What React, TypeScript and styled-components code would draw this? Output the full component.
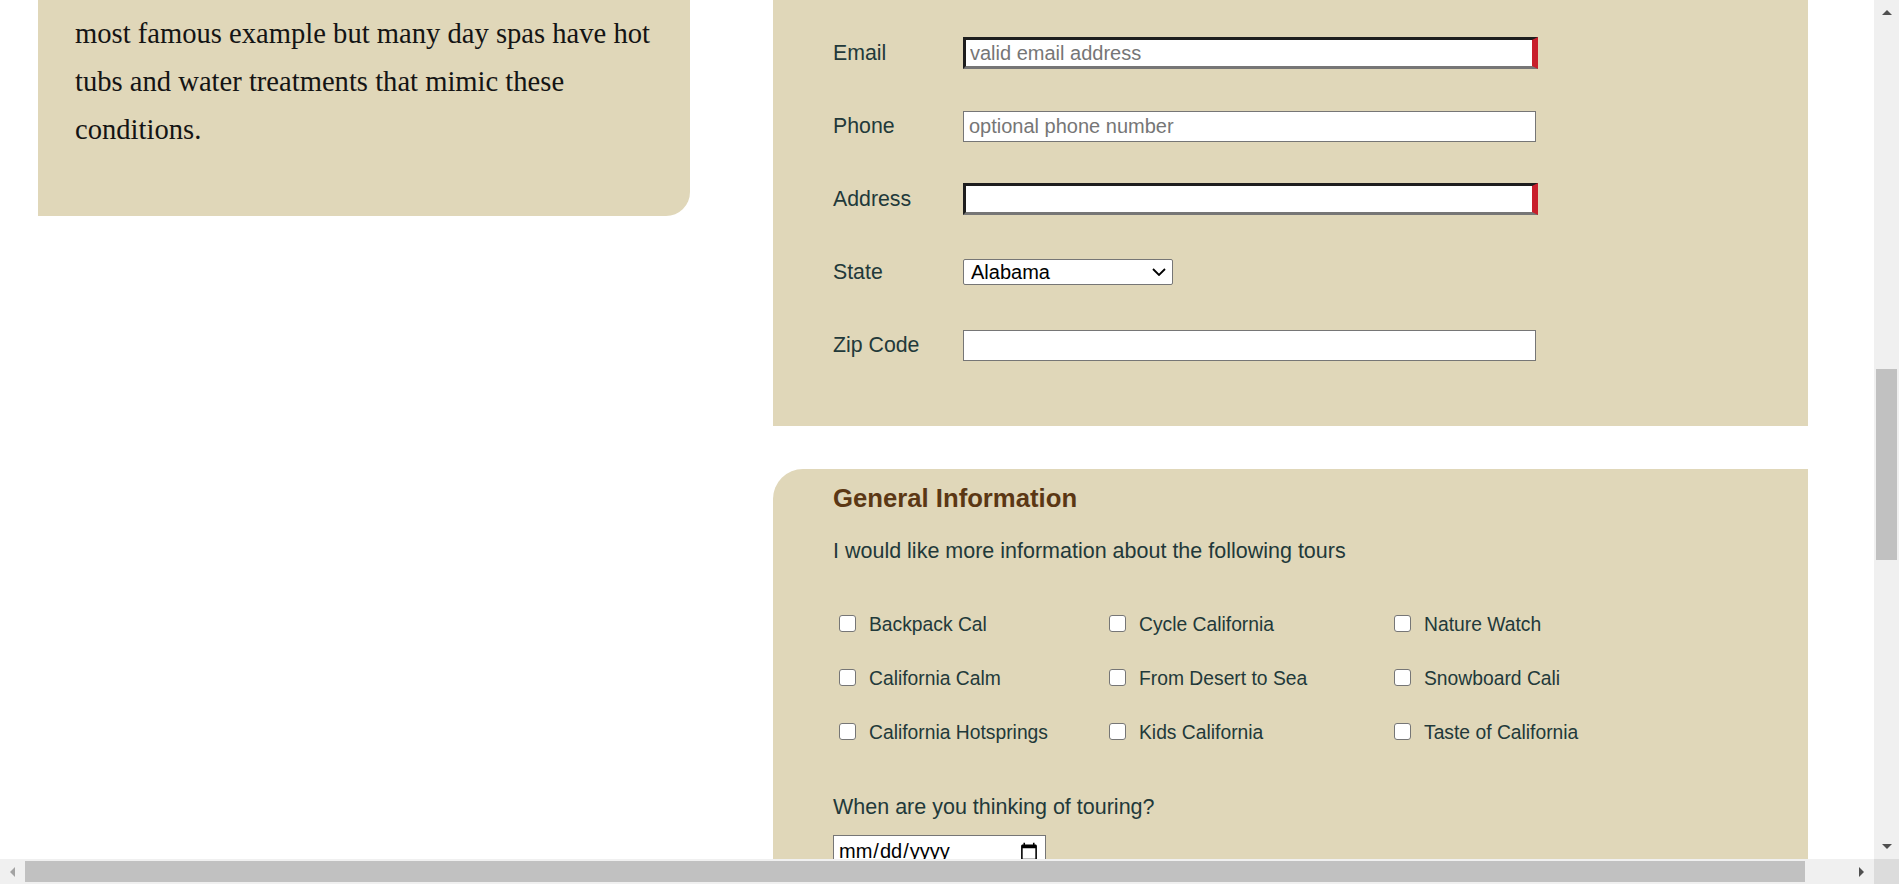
import React from "react";
import styled, { createGlobalStyle } from "styled-components";

const GlobalStyle = createGlobalStyle`
  html, body {
    margin: 0;
    padding: 0;
    overflow: hidden;
    background: #ffffff;
  }
  body {
    font-family: "Liberation Sans", Arial, sans-serif;
  }
  * { box-sizing: border-box; }
`;

const BEIGE = "#e0d7b9";
const INK = "#22393a";

const Screen = styled.div`
  width: 100vw;
  height: 100vh;
  display: grid;
  grid-template-columns: 1fr 25px;
  grid-template-rows: 1fr 25px;
  background: #fff;
`;

const Viewport = styled.div`
  overflow: hidden;
  display: flex;
  align-items: flex-start;
  background: #fff;
`;

const LeftColumn = styled.aside`
  flex: none;
  width: 652px;
  margin-left: 38px;
`;

const StoryCard = styled.div`
  background: ${BEIGE};
  border-bottom-right-radius: 24px;
  padding: 10px 10px 62px 37px;
  font-family: "Liberation Serif", "DejaVu Serif", serif;
  font-size: 28.6px;
  line-height: 48px;
  color: #141414;
  white-space: nowrap;
`;

const RightColumn = styled.main`
  flex: none;
  width: 1035px;
  margin-left: 83px;
  display: flex;
  flex-direction: column;
  gap: 43px;
`;

const ContactPanel = styled.section`
  background: ${BEIGE};
  padding: 37px 0 65px 60px;
  display: flex;
  flex-direction: column;
  gap: 41px;
`;

const FieldRow = styled.div`
  display: grid;
  grid-template-columns: 130px auto;
  align-items: center;
  height: 32px;
`;

const FieldLabel = styled.label`
  font-size: 21.3px;
  color: ${INK};
`;

const TextInput = styled.input<{ $invalid?: boolean }>`
  font-family: "Liberation Sans", Arial, sans-serif;
  font-size: 20px;
  color: #111;
  background: #fff;
  outline: none;
  margin: 0;
  ${(p) =>
    p.$invalid
      ? `
    width: 575px;
    height: 32px;
    padding: 0 4px;
    border-style: solid;
    border-width: 3px 6px 3px 3px;
    border-color: #1e1e1e #c81f2b #767676 #1e1e1e;
  `
      : `
    width: 573px;
    height: 31px;
    padding: 0 5px;
    border: 1px solid #767676;
  `}
  &::placeholder {
    color: #767676;
  }
`;

const SelectWrap = styled.div`
  position: relative;
  width: 210px;
  height: 26px;
`;

const StateSelect = styled.select`
  appearance: none;
  -webkit-appearance: none;
  width: 210px;
  height: 26px;
  margin: 0;
  padding: 0 24px 0 7px;
  border: 1px solid #767676;
  border-radius: 2px;
  background: #fff;
  font-family: "Liberation Sans", Arial, sans-serif;
  font-size: 20px;
  color: #000;
  outline: none;
`;

const Chevron = styled.svg`
  position: absolute;
  right: 7px;
  top: 9px;
  pointer-events: none;
`;

const InfoPanel = styled.section`
  background: ${BEIGE};
  border-top-left-radius: 30px;
  padding: 14px 0 60px 60px;
  display: flex;
  flex-direction: column;
`;

const SectionTitle = styled.h2`
  margin: 0;
  font-size: 25.7px;
  line-height: 30px;
  font-weight: bold;
  color: #5b3714;
`;

const Prompt = styled.p<{ $top: number }>`
  margin: ${(p) => p.$top}px 0 0;
  font-size: 21.5px;
  line-height: 24px;
  color: ${INK};
`;

const TourGrid = styled.div`
  margin-top: 50px;
  padding-left: 6px;
  display: grid;
  grid-template-columns: 270px 285px auto;
  row-gap: 30px;
`;

const TourOption = styled.label`
  display: flex;
  align-items: center;
  gap: 13px;
  height: 24px;
  font-size: 19.3px;
  color: ${INK};
`;

const TourCheck = styled.input`
  appearance: none;
  -webkit-appearance: none;
  flex: none;
  margin: 0 0 4px;
  width: 17px;
  height: 17px;
  border: 1.5px solid #767676;
  border-radius: 3px;
  background: #fff;
`;

const DateField = styled.input`
  margin-top: 16px;
  width: 213px;
  height: 33px;
  padding: 0 4px;
  border: 1px solid #767676;
  background: #fff;
  font-family: "Liberation Sans", Arial, sans-serif;
  font-size: 20px;
  color: #000;
`;

/* ---------- browser scrollbars ---------- */

const VScrollbar = styled.div`
  background: #f0f0f0;
  display: flex;
  flex-direction: column;
`;

const HScrollbar = styled.div`
  background: #f0f0f0;
  display: flex;
  flex-direction: row;
`;

const ScrollCorner = styled.div`
  background: #dcdcdc;
`;

const ArrowButton = styled.div`
  flex: none;
  width: 25px;
  height: 25px;
  display: flex;
  align-items: center;
  justify-content: center;
`;

const VTrack = styled.div`
  flex: 1;
  padding: 0 2px;
  display: flex;
  flex-direction: column;
`;

const HTrack = styled.div`
  flex: 1;
  padding: 2px 0;
  display: flex;
  flex-direction: row;
`;

const Thumb = styled.div<{ $offset: number; $length: number; $vertical?: boolean }>`
  flex: none;
  background: #c1c1c1;
  ${(p) =>
    p.$vertical
      ? `margin-top: ${p.$offset}px; height: ${p.$length}px;`
      : `margin-left: ${p.$offset}px; width: ${p.$length}px;`}
`;

const Arrow = ({ dir, color }: { dir: "up" | "down" | "left" | "right"; color: string }) => {
  const pts =
    dir === "up"
      ? "0,5 5,0 10,5"
      : dir === "down"
      ? "0,0 10,0 5,5"
      : dir === "left"
      ? "5,0 5,10 0,5"
      : "0,0 5,5 0,10";
  const w = dir === "up" || dir === "down" ? 10 : 5;
  const h = dir === "up" || dir === "down" ? 5 : 10;
  return (
    <svg width={w} height={h} viewBox={`0 0 ${w} ${h}`}>
      <polygon points={pts} fill={color} />
    </svg>
  );
};

const tours = [
  "Backpack Cal",
  "Cycle California",
  "Nature Watch",
  "California Calm",
  "From Desert to Sea",
  "Snowboard Cali",
  "California Hotsprings",
  "Kids California",
  "Taste of California",
];

export default function App() {
  return (
    <>
      <GlobalStyle />
      <Screen>
        <Viewport>
          <LeftColumn>
            <StoryCard>
              most famous example but many day spas have hot
              <br />
              tubs and water treatments that mimic these
              <br />
              conditions.
            </StoryCard>
          </LeftColumn>

          <RightColumn>
            <ContactPanel>
              <FieldRow>
                <FieldLabel htmlFor="email">Email</FieldLabel>
                <TextInput id="email" type="email" $invalid placeholder="valid email address" />
              </FieldRow>
              <FieldRow>
                <FieldLabel htmlFor="phone">Phone</FieldLabel>
                <TextInput id="phone" type="tel" placeholder="optional phone number" />
              </FieldRow>
              <FieldRow>
                <FieldLabel htmlFor="address">Address</FieldLabel>
                <TextInput id="address" type="text" $invalid />
              </FieldRow>
              <FieldRow>
                <FieldLabel htmlFor="state">State</FieldLabel>
                <SelectWrap>
                  <StateSelect id="state" defaultValue="AL">
                    <option value="AL">Alabama</option>
                    <option value="AK">Alaska</option>
                    <option value="AZ">Arizona</option>
                    <option value="CA">California</option>
                  </StateSelect>
                  <Chevron width="14" height="8" viewBox="0 0 14 8">
                    <polyline points="1,1 7,7 13,1" fill="none" stroke="#000" strokeWidth="1.8" />
                  </Chevron>
                </SelectWrap>
              </FieldRow>
              <FieldRow>
                <FieldLabel htmlFor="zip">Zip Code</FieldLabel>
                <TextInput id="zip" type="text" />
              </FieldRow>
            </ContactPanel>

            <InfoPanel>
              <SectionTitle>General Information</SectionTitle>
              <Prompt $top={26}>I would like more information about the following tours</Prompt>
              <TourGrid>
                {tours.map((t) => (
                  <TourOption key={t}>
                    <TourCheck type="checkbox" />
                    {t}
                  </TourOption>
                ))}
              </TourGrid>
              <Prompt $top={50}>When are you thinking of touring?</Prompt>
              <DateField type="date" />
            </InfoPanel>
          </RightColumn>
        </Viewport>

        <VScrollbar>
          <ArrowButton>
            <Arrow dir="up" color="#505050" />
          </ArrowButton>
          <VTrack>
            <Thumb $vertical $offset={344} $length={191} />
          </VTrack>
          <ArrowButton>
            <Arrow dir="down" color="#505050" />
          </ArrowButton>
        </VScrollbar>

        <HScrollbar>
          <ArrowButton>
            <Arrow dir="left" color="#a3a3a3" />
          </ArrowButton>
          <HTrack>
            <Thumb $offset={0} $length={1780} />
          </HTrack>
          <ArrowButton>
            <Arrow dir="right" color="#505050" />
          </ArrowButton>
        </HScrollbar>

        <ScrollCorner />
      </Screen>
    </>
  );
}
